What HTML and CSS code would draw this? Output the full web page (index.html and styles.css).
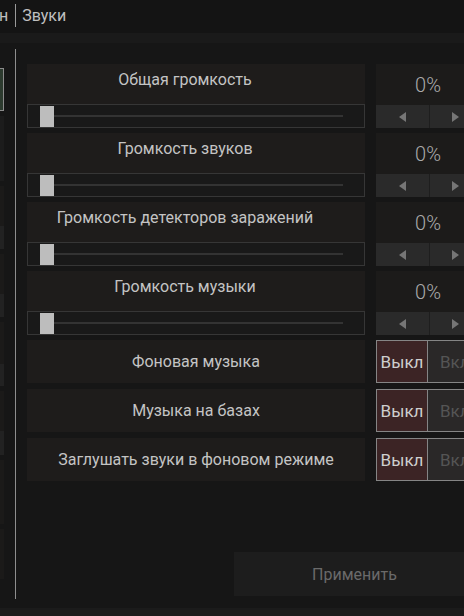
FILE: index.html
```html
<!DOCTYPE html>
<html lang="ru">
<head>
<meta charset="utf-8">
<link rel="stylesheet" href="styles.css">
</head>
<body>
<div class="screen">
  <header class="tabs">
    <span class="tab">н</span>
    <span class="tab-sep"></span>
    <span class="tab">Звуки</span>
  </header>
  <div class="band"></div>
  <main class="main">
    <aside class="side">
      <div class="side-item active"></div>
      <div class="side-item h65"></div>
      <div class="side-item h40 dim"></div>
      <div class="side-item h23 lite"></div>
      <div class="side-item h40 dim"></div>
      <div class="side-item h23 lite"></div>
      <div class="side-item h42 dim"></div>
      <div class="side-item h22 lite"></div>
      <div class="side-item h40 dim"></div>
      <div class="side-item h24 lite"></div>
      <div class="side-item h64 dim"></div>
      <div class="side-item h50 dim"></div>
    </aside>
    <div class="vline"></div>
    <section class="content">
      <div class="row slider-row">
        <div class="label-col">
          <div class="label">Общая громкость</div>
          <div class="slider"><span class="thumb"></span><span class="track"></span></div>
        </div>
        <div class="value-col">
          <div class="value">0%</div>
          <div class="arrows"><span class="arrow left"></span><span class="arrow right"></span></div>
        </div>
      </div>
      <div class="row slider-row">
        <div class="label-col">
          <div class="label">Громкость звуков</div>
          <div class="slider"><span class="thumb"></span><span class="track"></span></div>
        </div>
        <div class="value-col">
          <div class="value">0%</div>
          <div class="arrows"><span class="arrow left"></span><span class="arrow right"></span></div>
        </div>
      </div>
      <div class="row slider-row">
        <div class="label-col">
          <div class="label">Громкость детекторов заражений</div>
          <div class="slider"><span class="thumb"></span><span class="track"></span></div>
        </div>
        <div class="value-col">
          <div class="value">0%</div>
          <div class="arrows"><span class="arrow left"></span><span class="arrow right"></span></div>
        </div>
      </div>
      <div class="row slider-row">
        <div class="label-col">
          <div class="label">Громкость музыки</div>
          <div class="slider"><span class="thumb"></span><span class="track"></span></div>
        </div>
        <div class="value-col">
          <div class="value">0%</div>
          <div class="arrows"><span class="arrow left"></span><span class="arrow right"></span></div>
        </div>
      </div>
      <div class="row toggle-row">
        <div class="toggle-label">Фоновая музыка</div>
        <div class="toggle"><span class="opt on">Выкл</span><span class="opt off">Вкл</span></div>
      </div>
      <div class="row toggle-row">
        <div class="toggle-label">Музыка на базах</div>
        <div class="toggle"><span class="opt on">Выкл</span><span class="opt off">Вкл</span></div>
      </div>
      <div class="row toggle-row">
        <div class="toggle-label">Заглушать звуки в фоновом режиме</div>
        <div class="toggle"><span class="opt on">Выкл</span><span class="opt off">Вкл</span></div>
      </div>
      <div class="actions">
        <button class="apply">Применить</button>
      </div>
    </section>
  </main>
  <div class="bottom"></div>
</div>
</body>
</html>
```

FILE: styles.css
```css
* { box-sizing: border-box; }
html, body { margin: 0; padding: 0; }
body {
  background: #161616;
  font-family: Roboto, "Liberation Sans", sans-serif;
  color: #c6c6c6;
  width: 464px;
  height: 616px;
  overflow: hidden;
}
.screen {
  width: 464px;
  height: 616px;
  display: flex;
  flex-direction: column;
  overflow: hidden;
}
.tabs {
  height: 33px;
  background: #141414;
  display: flex;
  align-items: center;
  gap: 6px;
  padding-bottom: 2px;
}
.tab {
  font-size: 16px;
  color: #c0c0c0;
  line-height: 20px;
}
.tab:first-child { margin-left: -1px; }
.tab-sep {
  width: 1px;
  height: 23px;
  background: #9a9a9a;
  margin-left: 1px;
}
.band {
  height: 10px;
  background: #1a1a1a;
}
.main {
  flex: 1;
  display: flex;
  align-items: flex-start;
  background: #161616;
}
.side {
  width: 4px;
  display: flex;
  flex-direction: column;
  gap: 5px;
  padding-top: 25px;
  flex-shrink: 0;
}
.side-item { width: 4px; background: #1c1c1c; }
.side-item.active {
  height: 43px;
  background: #2c3a2e;
  border: 1px solid #8b8b8b;
  border-left: none;
}
.side-item.dim { background: #1b1a19; }
.side-item.lite { background: #222222; margin-top: -5px; }
.h65 { height: 65px; }
.h40 { height: 40px; }
.h42 { height: 42px; }
.h23 { height: 23px; }
.h22 { height: 22px; }
.h24 { height: 24px; }
.h64 { height: 64px; }
.h50 { height: 50px; }
.vline {
  width: 1px;
  height: 550px;
  background: #8e8e8e;
  margin-left: 11px;
  margin-top: 6px;
  flex-shrink: 0;
}
.content {
  margin-left: 11px;
  padding-top: 21px;
  display: flex;
  flex-direction: column;
  width: 460px;
  flex-shrink: 0;
}
.row {
  display: flex;
  gap: 11px;
}
.slider-row { margin-bottom: 5px; }
.label-col {
  width: 338px;
  display: flex;
  flex-direction: column;
}
.label {
  height: 40px;
  background: #1e1c1b;
  font-size: 16px;
  line-height: 20px;
  padding-top: 6px;
  padding-right: 22px;
  text-align: center;
  color: #c4c4c4;
}
.slider {
  height: 24px;
  border: 1px solid #363636;
  background: #191919;
  display: flex;
  align-items: center;
  padding-left: 12px;
}
.thumb {
  width: 14px;
  height: 21px;
  background: #bdbdbd;
  flex-shrink: 0;
}
.track {
  width: 289px;
  height: 2px;
  background: #333333;
}
.value-col {
  width: 106px;
  display: flex;
  flex-direction: column;
}
.value {
  height: 41px;
  background: #1c1b1a;
  text-align: center;
  font-size: 20px;
  font-weight: 300;
  color: #aaaaaa;
  line-height: 22px;
  padding-top: 10px;
  padding-right: 2px;
}
.arrows {
  height: 23px;
  display: flex;
  gap: 1px;
  background: #1e1e1e;
}
.arrow {
  flex: 1;
  background: #2a2a2a;
  display: flex;
  align-items: center;
  justify-content: center;
}
.arrow::before {
  content: "";
  width: 0;
  height: 0;
  border-top: 5px solid transparent;
  border-bottom: 5px solid transparent;
}
.arrow.left::before { border-right: 7px solid #767676; }
.arrow.right::before { border-left: 7px solid #767676; }
.toggle-row { margin-bottom: 6px; }
.toggle-label {
  width: 338px;
  height: 43px;
  background: #1e1c1b;
  display: flex;
  align-items: center;
  justify-content: center;
  font-size: 16px;
  color: #c4c4c4;
}
.toggle {
  width: 106px;
  height: 43px;
  display: flex;
  border: 1px solid #858585;
  border-right: none;
}
.opt {
  display: flex;
  align-items: center;
  justify-content: center;
  font-size: 17px;
}
.opt.on {
  width: 51px;
  background: #3c2425;
  color: #cfcfcf;
  border-right: 1px solid #858585;
}
.opt.off {
  flex: 1;
  background: #2a2828;
  color: #555555;
  justify-content: flex-start;
  padding-left: 12px;
}
.actions {
  display: flex;
  justify-content: flex-end;
  margin-top: 65px;
  width: 448px;
}
.apply {
  width: 241px;
  height: 44px;
  background: #1d1d1d;
  border: none;
  color: #6a6a6a;
  font-family: Roboto, "Liberation Sans", sans-serif;
  font-size: 16px;
  padding: 0;
}
.bottom {
  height: 8px;
  background: #1b1b1b;
  flex-shrink: 0;
}
```
